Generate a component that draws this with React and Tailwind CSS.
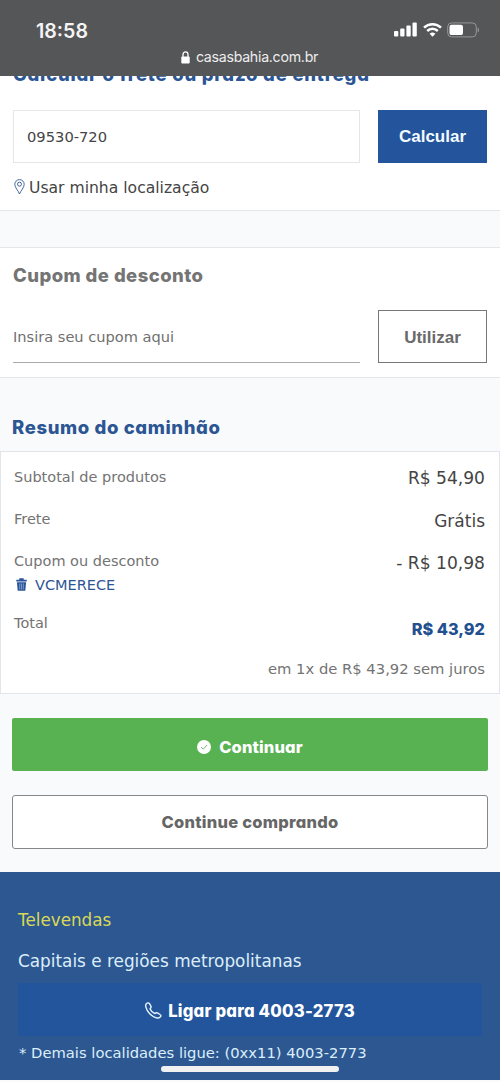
const geo = "font-['Inter',sans-serif] [font-feature-settings:'cv11']";

function StatusBar() {
  return (
    <header className="h-[76px] shrink-0 bg-[#555658] text-white">
      <div className="flex h-[46px] items-end justify-between pl-9 pr-[20px]">
        <span className="font-['Inter',sans-serif] text-[19.600px] leading-[30px] font-semibold text-[#f4f4f4]">18:58</span>
        <div className="flex h-[33px] items-center">
          <svg width="24" height="15" viewBox="0 0 24 15" fill="#fff">
            <rect x="0" y="9" width="4.300" height="5.500" rx="1" />
            <rect x="6.200" y="6.500" width="4.300" height="8" rx="1" />
            <rect x="12.400" y="3.500" width="4.300" height="11" rx="1" />
            <rect x="18.500" y="0.500" width="4.300" height="14" rx="1" />
          </svg>
          <svg className="ml-[5px]" width="19" height="14" viewBox="0 0 19 14" fill="none" stroke="#fff" strokeWidth="2.500">
            <path d="M1 4.700a12.200 12.200 0 0 1 17 0" />
            <path d="M4.200 8a7.600 7.600 0 0 1 10.600 0" />
            <path d="M9.500 13.800 6.600 10.800a4.200 4.200 0 0 1 5.800 0z" fill="#fff" stroke="none" />
          </svg>
          <svg className="ml-[5px]" width="33" height="16" viewBox="0 0 33 16">
            <rect x="0.700" y="0.900" width="28.600" height="14" rx="4" fill="none" stroke="#98989a" />
            <rect x="2.500" y="2.700" width="13.500" height="10.400" rx="2.200" fill="#fff" />
            <path d="M30.700 5.500v5c1.800-.7 1.800-4.300 0-5z" fill="#98989a" />
          </svg>
        </div>
      </div>
      <div className="flex h-[22px] items-center justify-center pr-[1px]">
        <svg className="mr-[6px]" width="9" height="13" viewBox="0 0 9 13">
          <path d="M2 6V3.500a2.500 2.700 0 0 1 5 0V6" fill="none" stroke="#fff" strokeWidth="1.300" />
          <rect x="0.300" y="5.500" width="8.400" height="7" rx="1" fill="#fff" />
        </svg>
        <span className="font-['Inter',sans-serif] text-[14.200px] tracking-[-0.280px] text-[#ededed]">casasbahia.com.br</span>
      </div>
    </header>
  );
}

function Shipping() {
  return (
    <section className="h-[135px] shrink-0 overflow-hidden border-b border-[#e4e7e9] bg-white px-[13px]">
      <div className="h-[34px] overflow-hidden">
        <h2 className={`${geo} -mt-[12px] text-[18.500px] leading-5 font-extrabold tracking-[0.780px] whitespace-nowrap text-[#2b5593]`}>Calcular o frete ou prazo de entrega</h2>
      </div>
      <div className="flex h-[53px] justify-between">
        <div className="flex w-[347px] items-center border border-[#e5e6e7] pt-[1px] pl-[13px] text-[14.700px] text-[#444]">09530-720</div>
        <button className="w-[109px] bg-[#23549c] pt-px font-['Liberation_Sans',sans-serif] text-[17px] font-bold text-[#f2fbff]">Calcular</button>
      </div>
      <div className="flex h-[48px] items-center text-[15.600px] text-[#444]">
        <svg className="mr-[4px] ml-[1px]" width="11" height="16" viewBox="0 0 11 16" fill="none" stroke="#45689c">
          <path d="M5.500 15C4.300 11.500.8 8.700.8 5.300a4.700 4.700 0 0 1 9.400 0c0 3.400-3.500 6.200-4.700 9.700z" />
          <circle cx="5.500" cy="5.200" r="2" />
        </svg>
        <span className="pt-[3px]">Usar minha localização</span>
      </div>
    </section>
  );
}

function Coupon() {
  return (
    <section className="mt-[36px] h-[131px] shrink-0 border-y border-[#e4e7e9] bg-white px-[13px]">
      <h2 className={`${geo} h-[62px] pt-[13px] text-[18.500px] leading-7 font-extrabold tracking-[0.440px] text-[#747474]`}>Cupom de desconto</h2>
      <div className="flex h-[53px] justify-between">
        <div className="flex w-[347px] items-center border-b border-[#aaa] pt-[1px] text-[14.600px] text-[#707070]">Insira seu cupom aqui</div>
        <button className="w-[109px] border border-[#777] pt-[2px] font-['Liberation_Sans',sans-serif] text-[17px] font-bold text-[#6a6a6a]">Utilizar</button>
      </div>
    </section>
  );
}

function Summary() {
  return (
    <section className="shrink-0">
      <h2 className={`${geo} h-[73px] pt-[35px] pl-3 text-[18.500px] leading-7 font-extrabold tracking-[0.620px] text-[#2b5593]`}>Resumo do caminhão</h2>
      <div className="h-[243px] border border-[#e2e6ea] bg-white pr-[14px] pl-[13px] text-[14.500px] text-[#737373]">
        <div className="flex h-[47px] items-center justify-between pt-[4px]">
          <span>Subtotal de produtos</span><span className="mt-[3px] text-[17.100px] text-[#444]">R$ 54,90</span>
        </div>
        <div className="flex h-[42px] items-center justify-between">
          <span>Frete</span><span className="mt-[3px] text-[17px] text-[#444]">Grátis</span>
        </div>
        <div className="flex h-[42px] items-center justify-between">
          <span>Cupom ou desconto</span><span className="mt-[3px] text-[17.100px] text-[#444]">- R$ 10,98</span>
        </div>
        <div className="-mt-[7px] flex h-[20px] items-center text-[#2c5595]">
          <svg className="mr-[8px] -mt-[3px] ml-[2px]" width="11" height="13" viewBox="0 0 11 13" fill="#2b559b">
            <path d="M.3 1.800h3V.3h4.400v1.500h3v1.800H.3zM.9 4.200h9.200l-.8 8.500H1.700z" />
            <path d="M3.700 5.500v6M5.500 5.500v6M7.300 5.500v6" stroke="#a1b5d4" strokeWidth=".7" />
          </svg>
          <span>VCMERECE</span>
        </div>
        <div className="flex h-[60px] items-center justify-between">
          <span className="-mt-[5px]">Total</span><span className={`${geo} mt-[6px] text-[16.300px] font-extrabold text-[#22508f]`}>R$ 43,92</span>
        </div>
        <div className="flex h-[22px] items-center justify-end pt-[5px] text-[14.750px]">em 1x de R$ 43,92 sem juros</div>
      </div>
    </section>
  );
}

function Actions() {
  return (
    <section className="flex h-[178px] shrink-0 flex-col gap-6 px-3 pt-6">
      <button className={`${geo} flex h-[53px] items-center justify-center rounded-[2px] bg-[#59b252] pt-[5px] text-[16.500px] font-extrabold tracking-[0.150px] text-white`}>
        <svg className="mr-2" width="14" height="14" viewBox="0 0 14 14">
          <circle cx="7" cy="7" r="7" fill="#fff" />
          <path d="m4 7 2.200 2.200 4-4.200" fill="none" stroke="#79b876" strokeWidth="1" />
        </svg>
        <span>Continuar</span>
      </button>
      <button className={`${geo} h-[54px] rounded-[3px] border-[1.500px] border-[#85878a] bg-white text-[16.500px] font-extrabold tracking-[0.250px] text-[#666]`}>Continue comprando</button>
    </section>
  );
}

function Footer() {
  return (
    <footer className="h-[208px] shrink-0 bg-[#2d5791] px-[18px] text-[#dceefa]">
      <div className="flex h-[68px] items-end text-[16.800px] leading-[40px] text-[#d9d957]">Televendas</div>
      <div className="flex h-[43px] items-center text-[16.880px]">Capitais e regiões metropolitanas</div>
      <button className={`${geo} flex h-[53px] w-full items-center justify-center bg-[#23559c] pt-[5px] text-[16.700px] font-extrabold tracking-[0.200px] text-white`}>
        <svg className="-mt-[4px] mr-[6px]" width="17" height="17" viewBox="0 0 17 17" fill="none" stroke="#e6f4ff" strokeWidth="1.400" strokeLinejoin="round">
          <path d="M1.500 1.500C2.600.6 3.800.6 4.500 1.600l1.400 2.500c.5 1 .1 1.800-.9 2.600.8 2.100 2.600 4 4.900 4.900.9-.9 1.600-1.200 2.500-.7l2.600 1.600c1.200.7 1.200 1.700.2 2.500-1 1-2.300 1.300-3.800.9C6.500 14.500 2 9.800.9 5.100.5 3.600.6 2.400 1.500 1.500z" />
        </svg>
        <span>Ligar para 4003-2773</span>
      </button>
      <div className="flex h-[30px] items-center pt-[4px] pl-px text-[14.740px] whitespace-nowrap">* Demais localidades ligue: (0xx11) 4003-2773</div>
      <div className="ml-[143px] h-[6px] w-[178px] rounded-full bg-[#f1f1f1]" />
    </footer>
  );
}

export default function App() {
  return (
    <div className="flex h-[1082px] w-[500px] flex-col overflow-hidden bg-[#f8fafc] font-['DejaVu_Sans',sans-serif] leading-normal">
      <StatusBar />
      <Shipping />
      <Coupon />
      <Summary />
      <Actions />
      <Footer />
    </div>
  );
}
